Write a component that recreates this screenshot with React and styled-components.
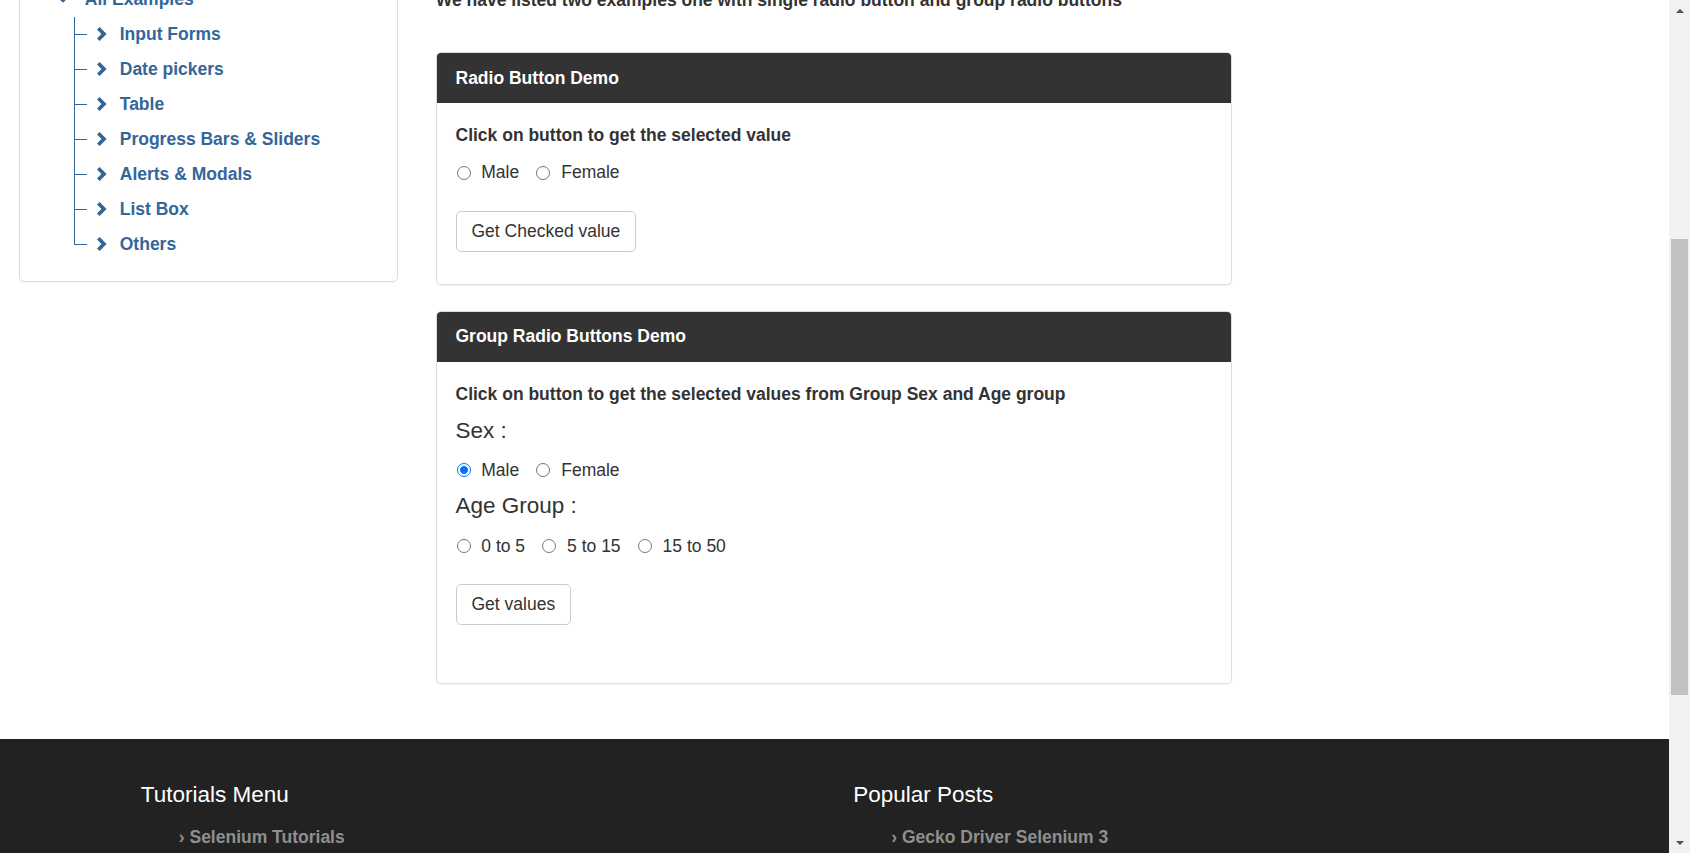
import React from "react";
import styled, { createGlobalStyle } from "styled-components";

const GlobalStyle = createGlobalStyle`
  * { box-sizing: border-box; }
  html, body {
    margin: 0;
    padding: 0;
    overflow: hidden;
  }
  body {
    font-family: "Liberation Sans", Arial, sans-serif;
    font-size: 17.5px;
    line-height: 25px;
    color: #333;
    background: #fff;
  }
`;

const LINK = "#336699";

const Viewport = styled.div`
  display: flex;
  height: 853px;
  width: 100vw;
`;

const Page = styled.div`
  flex: 1;
  min-width: 0;
  overflow: hidden;
`;

// page is shown scrolled down a little
const Scrolled = styled.div`
  margin-top: -40px;
`;

const Row = styled.div`
  display: flex;
  align-items: flex-start;
`;

const SideCol = styled.aside`
  width: 417px;
  padding: 0 18.75px;
`;

const MainCol = styled.main`
  width: 834px;
  padding: 0 18.75px 55px;
`;

/* ---------- sidebar tree ---------- */

const SidePanel = styled.div`
  border: 1px solid #ddd;
  border-radius: 5px;
  padding: 20.5px 0 19.5px;
  box-shadow: 0 1px 1px rgba(0, 0, 0, 0.05);
`;

const TopItem = styled.div`
  display: flex;
  align-items: center;
  height: 35px;
  padding-left: 37px;
  gap: 16px;
  color: ${LINK};
  font-weight: bold;
`;

const TreeList = styled.ul`
  list-style: none;
  margin: 0;
  padding: 0 0 0 54px;
`;

const TreeItem = styled.li`
  display: flex;
  align-items: center;
  height: 35px;
`;

const Guide = styled.span`
  align-self: stretch;
  width: 13px;
  background:
    linear-gradient(${LINK}, ${LINK}) no-repeat left top / 1px ${({ $last }) => ($last ? "50%" : "100%")},
    linear-gradient(${LINK}, ${LINK}) no-repeat left center / 100% 1px;
`;

const Chevron = styled.svg`
  width: 12px;
  height: 14px;
  margin-left: 9px;
  flex-shrink: 0;
`;

const TreeLink = styled.a`
  margin-left: 12px;
  color: ${LINK};
  font-weight: bold;
  text-decoration: none;
  white-space: nowrap;
`;

const ChevronRight = () => (
  <Chevron viewBox="0 0 12 14">
    <polygon points="1,2.6 3.6,0 10.6,7 3.6,14 1,11.4 5.4,7" fill={LINK} />
  </Chevron>
);

const CaretDown = () => (
  <svg width="12" height="10" viewBox="0 0 14 12">
    <polygon points="2.6,1 0,3.6 7,10.6 14,3.6 11.4,1 7,5.4" fill={LINK} />
  </svg>
);

/* ---------- main panels ---------- */

const Description = styled.p`
  margin: 28px 0 39px;
  font-weight: bold;
`;

const Panel = styled.section`
  border: 1px solid #ddd;
  border-radius: 5px;
  margin-bottom: 26px;
  overflow: hidden;
  box-shadow: 0 1px 1px rgba(0, 0, 0, 0.05);

  &:last-child {
    margin-bottom: 0;
  }
`;

const PanelHeading = styled.div`
  background: #333;
  color: #fff;
  font-weight: bold;
  padding: 12.5px 18.75px;
  line-height: 25px;
`;

const PanelBody = styled.div`
  padding: 18.75px 18.75px;
`;

const BodyTitle = styled.label`
  display: block;
  font-weight: bold;
  margin: ${({ $mt }) => $mt || 0}px 0 ${({ $mb }) => $mb}px;
`;

const GroupHeading = styled.h4`
  margin: ${({ $mt }) => $mt}px 0 0;
  font-size: 22.5px;
  font-weight: normal;
  line-height: 24.75px;
`;

const RadioRow = styled.div`
  display: flex;
  align-items: center;
  height: 25px;
  padding-left: 1px;
  margin-top: ${({ $mt }) => $mt || 0}px;
`;

const RadioOption = styled.label`
  display: inline-flex;
  align-items: center;
  gap: 10.8px;
  margin-right: 17.2px;
  cursor: pointer;
`;

const Radio = styled.input.attrs({ type: "radio" })`
  appearance: none;
  width: 14px;
  height: 14px;
  margin: 0;
  border: 1px solid #767676;
  border-radius: 50%;
  background: #fff;

  &:checked {
    border: 1.5px solid #0075ff;
    background: radial-gradient(circle, #0075ff 0 3.6px, #fff 4.2px);
  }
`;

const Button = styled.button`
  display: inline-block;
  margin: ${({ $mt }) => $mt}px 0 ${({ $mb }) => $mb}px;
  padding: 7.2px 15px;
  font: inherit;
  line-height: 25px;
  color: #333;
  background: #fff;
  border: 1px solid #ccc;
  border-radius: 5px;
  cursor: pointer;
`;

/* ---------- footer ---------- */

const Footer = styled.footer`
  background: #222;
  padding: 44.5px 0 80px;
`;

const FooterInner = styled.div`
  max-width: 1425px;
  margin: 0 auto;
  display: grid;
  grid-template-columns: 1fr 1fr;
`;

const FooterCol = styled.div`
  padding: 0 18.75px;
`;

const FooterTitle = styled.h3`
  margin: 0 0 17px;
  color: #fff;
  font-size: 22.5px;
  font-weight: normal;
  line-height: 24.75px;
`;

const FooterList = styled.ul`
  list-style: none;
  margin: 0;
  padding-left: 38px;
`;

const FooterLink = styled.li`
  color: #8f8f8f;
  font-weight: bold;

  &::before {
    content: "› ";
  }
`;

/* ---------- scrollbar ---------- */

const ScrollBar = styled.div`
  width: 21px;
  flex-shrink: 0;
  background: #f1f1f1;
  display: flex;
  flex-direction: column;
`;

const ScrollButton = styled.div`
  height: 21px;
  display: flex;
  align-items: center;
  justify-content: center;

  &::after {
    content: "";
    border-left: 4.5px solid transparent;
    border-right: 4.5px solid transparent;
    ${({ $down }) =>
      $down ? "border-top: 4.5px solid #505050;" : "border-bottom: 4.5px solid #505050;"}
  }
`;

const ScrollTrack = styled.div`
  flex: 1;
`;

const ScrollThumb = styled.div`
  margin: 218px 2px 0;
  height: 456px;
  background: #c1c1c1;
`;

const treeItems = [
  "Input Forms",
  "Date pickers",
  "Table",
  "Progress Bars & Sliders",
  "Alerts & Modals",
  "List Box",
  "Others",
];

function Option({ name, label, checked }) {
  return (
    <RadioOption>
      <Radio name={name} value={label} defaultChecked={checked} />
      {label}
    </RadioOption>
  );
}

export default function App() {
  return (
    <>
      <GlobalStyle />
      <Viewport>
        <Page>
          <Scrolled>
            <Row>
              <SideCol>
                <SidePanel>
                  <TopItem>
                    <CaretDown />
                    All Examples
                  </TopItem>
                  <TreeList>
                    {treeItems.map((item, i) => (
                      <TreeItem key={item}>
                        <Guide $last={i === treeItems.length - 1} />
                        <ChevronRight />
                        <TreeLink href="#">{item}</TreeLink>
                      </TreeItem>
                    ))}
                  </TreeList>
                </SidePanel>
              </SideCol>

              <MainCol>
                <Description>
                  We have listed two examples one with single radio button and group radio buttons
                </Description>

                <Panel>
                  <PanelHeading>Radio Button Demo</PanelHeading>
                  <PanelBody>
                    <BodyTitle $mt={1} $mb={12.5}>Click on button to get the selected value</BodyTitle>
                    <RadioRow>
                      <Option name="optradio" label="Male" />
                      <Option name="optradio" label="Female" />
                    </RadioRow>
                    <Button $mt={25.5} $mb={13}>Get Checked value</Button>
                  </PanelBody>
                </Panel>

                <Panel>
                  <PanelHeading>Group Radio Buttons Demo</PanelHeading>
                  <PanelBody>
                    <BodyTitle $mt={1.5} $mb={0}>
                      Click on button to get the selected values from Group Sex and Age group
                    </BodyTitle>
                    <GroupHeading $mt={12.3}>Sex :</GroupHeading>
                    <RadioRow $mt={13.6}>
                      <Option name="gender" label="Male" checked />
                      <Option name="gender" label="Female" />
                    </RadioRow>
                    <GroupHeading $mt={11.2}>Age Group :</GroupHeading>
                    <RadioRow $mt={15}>
                      <Option name="ageGroup" label="0 to 5" />
                      <Option name="ageGroup" label="5 to 15" />
                      <Option name="ageGroup" label="15 to 50" />
                    </RadioRow>
                    <Button $mt={25} $mb={39}>Get values</Button>
                  </PanelBody>
                </Panel>
              </MainCol>
            </Row>

            <Footer>
              <FooterInner>
                <FooterCol>
                  <FooterTitle>Tutorials Menu</FooterTitle>
                  <FooterList>
                    <FooterLink>Selenium Tutorials</FooterLink>
                  </FooterList>
                </FooterCol>
                <FooterCol>
                  <FooterTitle>Popular Posts</FooterTitle>
                  <FooterList>
                    <FooterLink>Gecko Driver Selenium 3</FooterLink>
                  </FooterList>
                </FooterCol>
              </FooterInner>
            </Footer>
          </Scrolled>
        </Page>

        <ScrollBar>
          <ScrollButton />
          <ScrollTrack>
            <ScrollThumb />
          </ScrollTrack>
          <ScrollButton $down />
        </ScrollBar>
      </Viewport>
    </>
  );
}
